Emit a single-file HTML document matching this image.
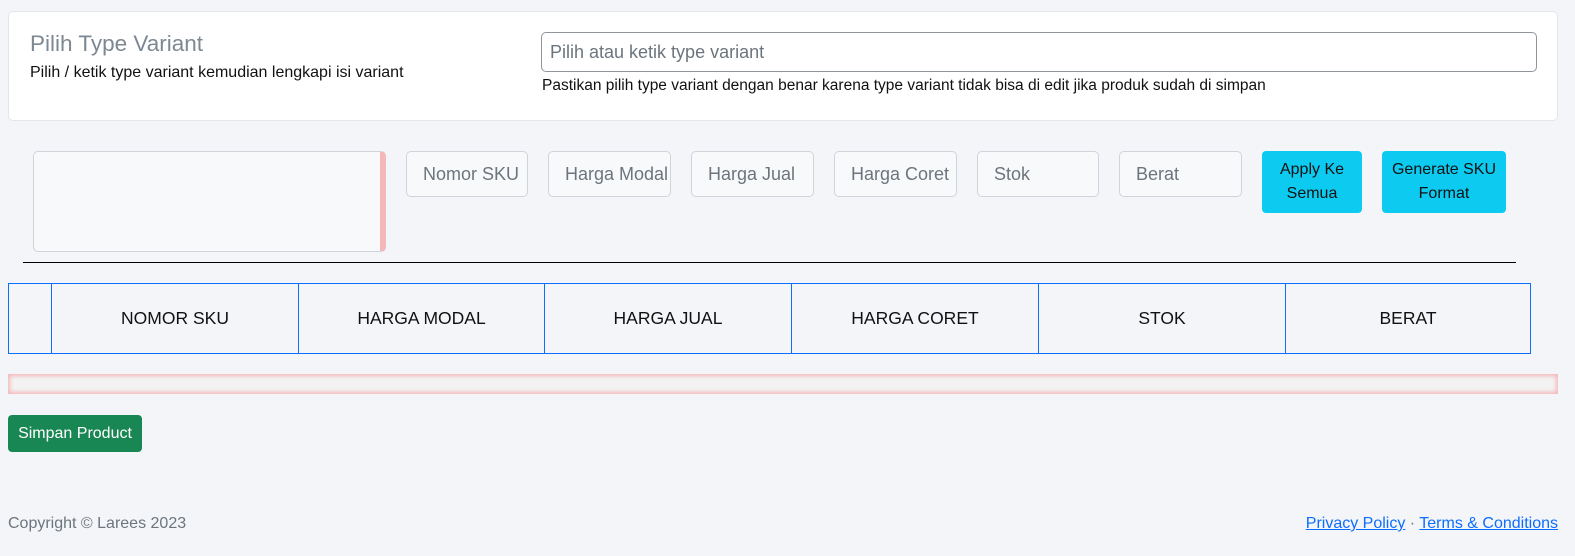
<!DOCTYPE html>
<html><head><meta charset="utf-8"><style>
*{box-sizing:border-box;margin:0;padding:0}
body{width:1575px;height:556px;background:#f4f5f9;font-family:"Liberation Sans",sans-serif;position:relative;overflow:hidden}
.a{position:absolute}
.card{left:8px;top:11px;width:1550px;height:110px;background:#fff;border:1px solid #e3e5ea;border-radius:5px}
.inp{background:#f8f9fb;border:1px solid #ced4da;border-radius:5px;color:#6c757d;font-size:18px;padding-left:16px;line-height:44px;height:46px;overflow:hidden;white-space:nowrap}
.btn{background:#0dcaf0;border-radius:4px;color:#111;font-size:16px;text-align:center;line-height:24px;padding-top:7px;height:62px}
table{border-collapse:collapse}
td{border:1.5px solid #0d6efd;height:70px;text-align:center;font-size:17.5px;color:#111}
</style></head><body>
<div class="a card"></div>
<div class="a" style="left:30px;top:31px;font-size:22.5px;color:#7d8893">Pilih Type Variant</div>
<div class="a" style="left:30px;top:64px;font-size:16px;color:#111">Pilih / ketik type variant kemudian lengkapi isi variant</div>
<div class="a" style="left:541px;top:32px;width:996px;height:40px;border:1px solid #8f959b;border-radius:5px;font-size:18px;color:#6c757d;padding-left:8px;line-height:38px">Pilih atau ketik type variant</div>
<div class="a" style="left:542px;top:77px;font-size:15.5px;color:#111">Pastikan pilih type variant dengan benar karena type variant tidak bisa di edit jika produk sudah di simpan</div>

<div class="a" style="left:33px;top:151px;width:353px;height:101px;background:#f8f9fb;border:1px solid #ced4da;border-radius:5px;border-right:6px solid #f4b8ba"></div>
<div class="a inp" style="left:406px;top:151px;width:122px">Nomor SKU</div>
<div class="a inp" style="left:548px;top:151px;width:123px">Harga Modal</div>
<div class="a inp" style="left:691px;top:151px;width:123px">Harga Jual</div>
<div class="a inp" style="left:834px;top:151px;width:123px">Harga Coret</div>
<div class="a inp" style="left:977px;top:151px;width:122px">Stok</div>
<div class="a inp" style="left:1119px;top:151px;width:123px">Berat</div>
<div class="a btn" style="left:1262px;top:151px;width:100px">Apply Ke<br>Semua</div>
<div class="a btn" style="left:1382px;top:151px;width:124px">Generate SKU<br>Format</div>
<div class="a" style="left:23px;top:262px;width:1493px;height:1px;background:#000"></div>

<table class="a" style="left:8px;top:283px;width:1523px">
<tr><td style="width:43px"></td><td style="width:247px">NOMOR SKU</td><td style="width:246px">HARGA MODAL</td><td style="width:247px">HARGA JUAL</td><td style="width:247px">HARGA CORET</td><td style="width:247px">STOK</td><td>BERAT</td></tr>
</table>
<div class="a" style="left:8px;top:374px;width:1550px;height:20px;background:#f3f3f3;box-shadow:inset 0 0 4px 2px #f4b8ba"></div>
<div class="a" style="left:8px;top:415px;width:134px;height:37px;background:#198754;border-radius:4px;color:#fff;font-size:16px;line-height:37px;text-align:center">Simpan Product</div>
<div class="a" style="left:8px;top:515px;font-size:16px;color:#6c757d">Copyright © Larees 2023</div>
<div class="a" style="right:17px;top:515px;font-size:16px;color:#6c757d"><span style="color:#0d6efd;text-decoration:underline">Privacy Policy</span> · <span style="color:#0d6efd;text-decoration:underline">Terms &amp; Conditions</span></div>
</body></html>
